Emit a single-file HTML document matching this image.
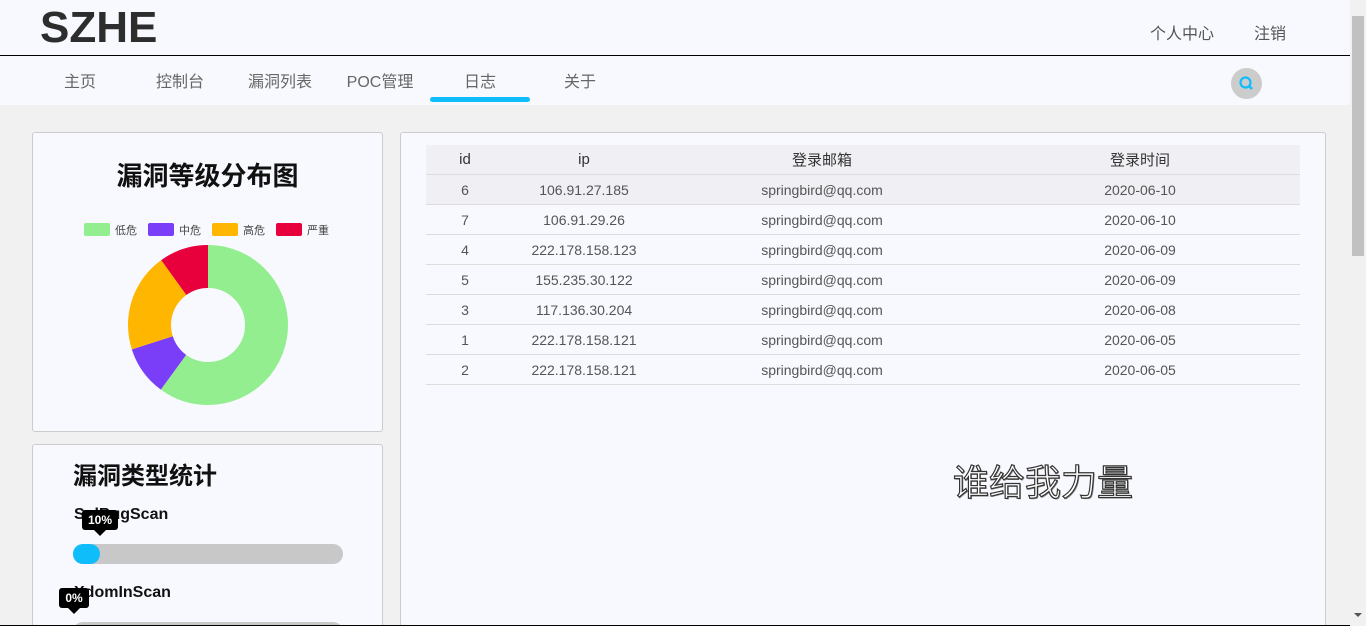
<!DOCTYPE html>
<html style="overflow:hidden;height:626px"><head><meta charset="utf-8"><style>
*{margin:0;padding:0;box-sizing:border-box}
body{width:1366px;height:626px;overflow:hidden;background:#f1f1f1;font-family:"Liberation Sans","Noto Sans CJK SC",sans-serif;position:relative}
.hdr{position:absolute;left:0;top:0;width:1350px;height:56px;background:#f8f9fe;border-bottom:1px solid #000}
.logo{position:absolute;left:40px;top:3px;font-size:44px;font-weight:bold;color:#2d2d2d}
.tr{position:absolute;top:20px;font-size:16px;color:#555}
.nav{position:absolute;left:0;top:56px;width:1350px;height:49px;background:#f8f9fe}
.nav span{position:absolute;top:12px;font-size:16px;color:#666;width:100px;text-align:center}
.ul{position:absolute;left:430px;top:97px;width:100px;height:5px;border-radius:3px;background:#10bdfb}
.srch{position:absolute;left:1231px;top:68px;width:31px;height:31px;border-radius:50%;background:#ccc}
.card{position:absolute;background:#f8f9fe;border:1px solid #ccc;border-radius:3px}
table{position:absolute;left:426px;top:145px;width:874px;border-collapse:collapse;font-size:14px;color:#555}
td,th{height:30px;border-bottom:1px solid #ddd;text-align:center;font-weight:normal;padding-top:1px}
th{height:29px;background:#f0eff4;color:#333;font-size:15px}
tr.h td{background:#f0eff4}
.sb{position:absolute;left:1350px;top:0;width:16px;height:626px;background:#f1f1f1}
.tip{position:absolute;background:#000;color:#fff;font-size:12px;font-weight:bold;border-radius:3px;text-align:center;height:20px;line-height:20px}
.tip:after{content:"";position:absolute;left:50%;margin-left:-6px;bottom:-6px;border:6px solid transparent;border-bottom:0;border-top-color:#000}
</style></head><body>
<div class="hdr"><div class="logo">SZHE</div><div class="tr" style="left:1150px">个人中心</div><div class="tr" style="left:1254px">注销</div></div>
<div class="nav">
<span style="left:30px">主页</span><span style="left:130px">控制台</span><span style="left:230px">漏洞列表</span><span style="left:330px">POC管理</span><span style="left:430px">日志</span><span style="left:530px">关于</span>
</div>
<div class="ul"></div>
<div class="srch"><svg width="31" height="31"><circle cx="14.5" cy="14.5" r="5" fill="none" stroke="#10bdfb" stroke-width="2.2"/><line x1="18" y1="18" x2="21" y2="21" stroke="#10bdfb" stroke-width="2.5"/></svg></div>

<div class="card" style="left:32px;top:132px;width:351px;height:300px">
<div style="position:absolute;left:0;width:100%;top:23px;text-align:center;font-size:26px;font-weight:bold;color:#111">漏洞等级分布图</div>
<svg style="position:absolute;left:0;top:0" width="351" height="300">
<g font-size="11" fill="#444">
<rect x="51" y="90" width="26" height="13" rx="2" fill="#93ee8f"/><text x="82" y="101">低危</text>
<rect x="115" y="90" width="26" height="13" rx="2" fill="#7a3ef8"/><text x="146" y="101">中危</text>
<rect x="179" y="90" width="26" height="13" rx="2" fill="#ffb600"/><text x="210" y="101">高危</text>
<rect x="243" y="90" width="26" height="13" rx="2" fill="#e8003d"/><text x="274" y="101">严重</text>
</g>
<g transform="translate(175,192) rotate(-90)" fill="none" stroke-width="43">
<circle r="58.5" stroke="#93ee8f" stroke-dasharray="220.6 400"/>
<circle r="58.5" stroke="#7a3ef8" stroke-dasharray="36.8 400" stroke-dashoffset="-220.6"/>
<circle r="58.5" stroke="#ffb600" stroke-dasharray="73.5 400" stroke-dashoffset="-257.4"/>
<circle r="58.5" stroke="#e8003d" stroke-dasharray="36.8 400" stroke-dashoffset="-330.9"/>
</g></svg>
</div>

<div class="card" style="left:32px;top:444px;width:351px;height:200px">
<div style="position:absolute;left:40px;top:11px;font-size:24px;font-weight:bold;color:#111">漏洞类型统计</div>
<div style="position:absolute;left:41px;top:61px;font-size:16px;font-weight:bold;color:#111">SqlBugScan</div>
<div class="tip" style="left:49px;top:65px;width:36px">10%</div>
<div style="position:absolute;left:40px;top:99px;width:270px;height:20px;border-radius:10px;background:#c8c8c8"><div style="width:27px;height:20px;border-radius:10px;background:#10bdfb"></div></div>
<div style="position:absolute;left:41px;top:139px;font-size:16px;font-weight:bold;color:#111">XdomInScan</div>
<div class="tip" style="left:26px;top:143px;width:30px">0%</div>
<div style="position:absolute;left:40px;top:177px;width:270px;height:20px;border-radius:10px;background:#c8c8c8"></div>
</div>

<div class="card" style="left:400px;top:132px;width:926px;height:520px"></div>
<table>
<tr><th style="width:78px">id</th><th style="width:160px">ip</th><th style="width:316px">登录邮箱</th><th>登录时间</th></tr>
<tr class="h"><td>6</td><td>106.91.27.185</td><td>springbird@qq.com</td><td>2020-06-10</td></tr>
<tr><td>7</td><td>106.91.29.26</td><td>springbird@qq.com</td><td>2020-06-10</td></tr>
<tr><td>4</td><td>222.178.158.123</td><td>springbird@qq.com</td><td>2020-06-09</td></tr>
<tr><td>5</td><td>155.235.30.122</td><td>springbird@qq.com</td><td>2020-06-09</td></tr>
<tr><td>3</td><td>117.136.30.204</td><td>springbird@qq.com</td><td>2020-06-08</td></tr>
<tr><td>1</td><td>222.178.158.121</td><td>springbird@qq.com</td><td>2020-06-05</td></tr>
<tr><td>2</td><td>222.178.158.121</td><td>springbird@qq.com</td><td>2020-06-05</td></tr>
</table>
<div style="position:absolute;left:953px;top:454px;font-size:36px;color:#fff;-webkit-text-stroke:1.2px #333;text-shadow:1px 1px 0 #888">谁给我力量</div>

<div class="sb"><div style="position:absolute;left:2px;top:16px;width:12px;height:240px;background:#c1c1c1"></div>
<div style="position:absolute;left:4px;top:613px;border:4px solid transparent;border-top:4px solid #555"></div></div>
<div style="position:absolute;left:0;top:625px;width:1350px;height:1px;background:#000"></div>
</body></html>
